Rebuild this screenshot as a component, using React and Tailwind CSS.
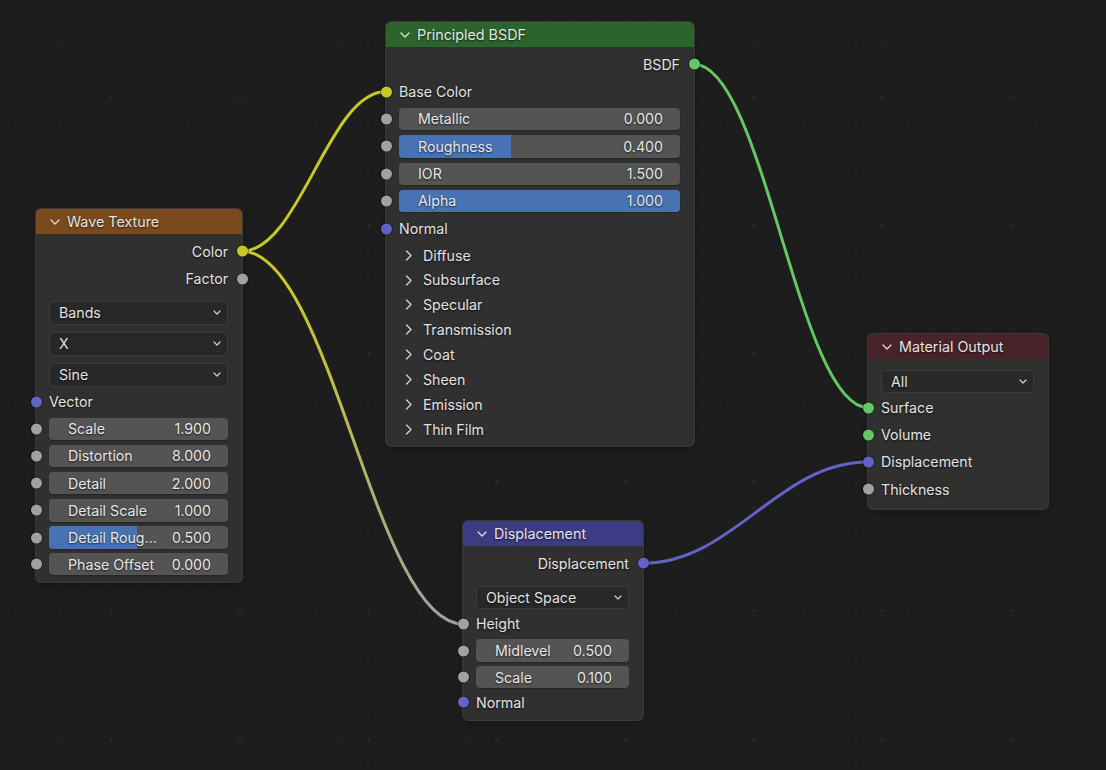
// Blender-style shader node editor

import React from 'react';

const YELLOW = '#c7c729';
const GRAY = '#a1a1a1';
const PURPLE = '#6363c7';
const GREEN = '#63c763';

const socketBg = {
    yellow: 'bg-[#c7c729]',
    gray: 'bg-[#a1a1a1]',
    purple: 'bg-[#6363c7]',
    green: 'bg-[#63c763]',
};

const textShadow = '[text-shadow:0_1px_2px_rgba(0,0,0,0.7)]';

const Socket = ({ color, side }) => (
    <span
        className={`absolute top-1/2 -translate-y-1/2 w-[11px] h-[11px] rounded-full shadow-[0_0_0_1px_rgba(0,0,0,0.35)] ${socketBg[color]} ${
            side === 'right' ? '-right-[5.5px]' : '-left-[5.5px]'
        }`}
    />
);

const ChevronDown = ({ className }) => (
    <svg className={className} width="10" height="6" viewBox="0 0 10 6" fill="none">
        <path d="M1 1 L5 5 L9 1" stroke="#dcdcdc" strokeWidth="1.3" strokeLinecap="round" strokeLinejoin="round" />
    </svg>
);

const ChevronRight = () => (
    <svg width="7" height="11" viewBox="0 0 7 11" fill="none">
        <path d="M1.5 1 L6 5.5 L1.5 10" stroke="#d6d6d6" strokeWidth="1.3" strokeLinecap="round" strokeLinejoin="round" />
    </svg>
);

const Header = ({ title, bg }) => (
    <div className={`h-[25px] flex items-center pl-[14px] gap-[7px] ${bg}`}>
        <ChevronDown />
        <span className={`text-[14.3px] text-[#e4e4e4] ${textShadow}`}>{title}</span>
    </div>
);

const OutputRow = ({ label, socket, h = 'h-[27.4px]' }) => (
    <div className={`relative ${h} flex items-center justify-end pr-[14px]`}>
        <span className={`text-[14.2px] text-[#e2e2e2] ${textShadow}`}>{label}</span>
        <Socket color={socket} side="right" />
    </div>
);

const InputRow = ({ label, socket, h = 'h-[27.2px]', className = '' }) => (
    <div className={`relative ${h} flex items-center pl-[13px] ${className}`}>
        <span className={`text-[14.2px] text-[#e2e2e2] ${textShadow}`}>{label}</span>
        <Socket color={socket} side="left" />
    </div>
);

const Field = ({ label, value, fill = 0, socket = 'gray', h = 'h-[27.2px]', className = '' }) => (
    <div className={`relative ${h} flex items-center pl-[13px] pr-[14px] ${className}`}>
        <Socket color={socket} side="left" />
        <div className="relative flex-1 h-[22.5px] rounded-[4px] bg-[#545454] overflow-hidden shadow-[0_1px_1px_rgba(0,0,0,0.25)]">
            {fill > 0 && <div className="absolute inset-y-0 left-0 bg-[#4772b3]" style={{ width: `${fill * 100}%` }} />}
            <div className="relative h-full flex items-center justify-between pl-[19px] pr-[17px] gap-2">
                <span className={`text-[14.2px] text-[#e6e6e6] whitespace-nowrap ${textShadow}`}>{label}</span>
                <span className={`text-[14.2px] text-[#e6e6e6] ${textShadow}`}>{value}</span>
            </div>
        </div>
    </div>
);

const Dropdown = ({ label, className = '' }) => (
    <div className={`pl-[13px] pr-[14px] ${className}`}>
        <div className="h-[23.3px] rounded-[4px] bg-[#282828] border border-[#3b3b3b] flex items-center justify-between pl-[9px] pr-[6px]">
            <span className={`text-[14.2px] text-[#e2e2e2] ${textShadow}`}>{label}</span>
            <svg width="8" height="5" viewBox="0 0 8 5" fill="none">
                <path d="M1 1 L4 4 L7 1" stroke="#d0d0d0" strokeWidth="1.2" strokeLinecap="round" strokeLinejoin="round" />
            </svg>
        </div>
    </div>
);

const PanelRow = ({ label }) => (
    <div className="h-[24.86px] flex items-center pl-[19px] gap-[11px]">
        <ChevronRight />
        <span className={`text-[14.2px] text-[#e2e2e2] ${textShadow}`}>{label}</span>
    </div>
);

const nodeBase = 'absolute rounded-[5px] bg-[#303030] overflow-visible shadow-[0_0_0_1px_#3a3a3a,0_2px_6px_rgba(0,0,0,0.35)]';

const WaveTexture = () => (
    <div className={`${nodeBase} left-[36px] top-[209px] w-[206px] pb-[4px]`}>
        <div className="rounded-t-[5px] overflow-hidden">
            <Header title="Wave Texture" bg="bg-[#7a4a1e]" />
        </div>
        <div className="pt-[3.5px]">
            <OutputRow label="Color" socket="yellow" />
            <OutputRow label="Factor" socket="gray" />
            <Dropdown label="Bands" className="mt-[9px]" />
            <Dropdown label="X" className="mt-[7.7px]" />
            <Dropdown label="Sine" className="mt-[7.7px]" />
            <InputRow label="Vector" socket="purple" className="mt-[1.5px]" />
            <Field label="Scale" value="1.900" />
            <Field label="Distortion" value="8.000" />
            <Field label="Detail" value="2.000" />
            <Field label="Detail Scale" value="1.000" />
            <Field label="Detail Roug..." value="0.500" fill={0.49} />
            <Field label="Phase Offset" value="0.000" className="-mt-[0.6px]" />
        </div>
    </div>
);

const PrincipledBSDF = () => (
    <div className={`${nodeBase} left-[386px] top-[22px] w-[308px] pb-[4px]`}>
        <div className="rounded-t-[5px] overflow-hidden">
            <Header title="Principled BSDF" bg="bg-[#2b652b]" />
        </div>
        <div className="pt-[3.5px]">
            <OutputRow label="BSDF" socket="green" />
            <InputRow label="Base Color" socket="yellow" h="h-[27.4px]" />
            <Field label="Metallic" value="0.000" h="h-[27.4px]" />
            <Field label="Roughness" value="0.400" fill={0.4} h="h-[27.4px]" />
            <Field label="IOR" value="1.500" h="h-[27.4px]" />
            <Field label="Alpha" value="1.000" fill={1} h="h-[27.4px]" />
            <InputRow label="Normal" socket="purple" h="h-[27.4px]" />
        </div>
        <div className="mt-[0.5px]">
            {['Diffuse', 'Subsurface', 'Specular', 'Transmission', 'Coat', 'Sheen', 'Emission', 'Thin Film'].map((p) => (
                <PanelRow key={p} label={p} />
            ))}
        </div>
    </div>
);

const DisplacementNode = () => (
    <div className={`${nodeBase} left-[463px] top-[521px] w-[180px] pb-[4px]`}>
        <div className="rounded-t-[5px] overflow-hidden">
            <Header title="Displacement" bg="bg-[#3c3c84]" />
        </div>
        <div className="pt-[3.5px]">
            <OutputRow label="Displacement" socket="purple" />
            <Dropdown label="Object Space" className="mt-[9px]" />
            <InputRow label="Height" socket="gray" className="mt-[1.5px]" h="h-[26.6px]" />
            <Field label="Midlevel" value="0.500" h="h-[26.6px]" />
            <Field label="Scale" value="0.100" h="h-[26.6px]" />
            <InputRow label="Normal" socket="purple" h="h-[24px]" className="mb-[2px]" />
        </div>
    </div>
);

const MaterialOutput = () => (
    <div className={`${nodeBase} left-[868px] top-[334px] w-[180px] pb-[6px]`}>
        <div className="rounded-t-[5px] overflow-hidden">
            <Header title="Material Output" bg="bg-[#4a232a]" />
        </div>
        <Dropdown label="All" className="mt-[10.5px]" />
        <div className="mt-[1.3px]">
            <InputRow label="Surface" socket="green" />
            <InputRow label="Volume" socket="green" />
            <InputRow label="Displacement" socket="purple" />
            <InputRow label="Thickness" socket="gray" />
        </div>
    </div>
);

// cubic wire between two sockets, handles proportional to horizontal distance
const wirePath = ([x1, y1], [x2, y2]) => {
    const h = Math.abs(x2 - x1) * 0.4;
    return `M${x1} ${y1} C${x1 + h} ${y1} ${x2 - h} ${y2} ${x2} ${y2}`;
};

const sockets = {
    waveColor: [242, 251.2],
    baseColor: [386, 91.6],
    height: [463, 624],
    bsdf: [694, 64.2],
    surface: [868, 407.5],
    dispOut: [643, 563.2],
    matDisp: [868, 462],
};

const Wires = () => (
    <svg className="absolute inset-0" width="1106" height="770" viewBox="0 0 1106 770" fill="none">
        <defs>
            <linearGradient
                id="heightWire"
                gradientUnits="userSpaceOnUse"
                x1={sockets.waveColor[0]}
                y1={sockets.waveColor[1]}
                x2={sockets.height[0]}
                y2={sockets.height[1]}
            >
                <stop offset="0.15" stopColor={YELLOW} />
                <stop offset="0.95" stopColor={GRAY} />
            </linearGradient>
        </defs>
        <path d={wirePath(sockets.waveColor, sockets.baseColor)} stroke={YELLOW} strokeWidth="3" />
        <path d={wirePath(sockets.waveColor, sockets.height)} stroke="url(#heightWire)" strokeWidth="3" />
        <path d={wirePath(sockets.bsdf, sockets.surface)} stroke={GREEN} strokeWidth="3" />
        <path d={wirePath(sockets.dispOut, sockets.matDisp)} stroke={PURPLE} strokeWidth="3" />
    </svg>
);

export default function App() {
    return (
        <div className="relative w-[1106px] h-[770px] overflow-hidden bg-[#1d1d1d] font-['Inter','Noto_Sans',sans-serif] [background-image:radial-gradient(circle,#2c2c2c_1.1px,transparent_1.5px),radial-gradient(circle,#252525_0.8px,transparent_1.1px)] [background-size:128.5px_128.5px,25.7px_25.7px] [background-position:47.4px_32.4px,-4.5px_7.2px]">
            <Wires />
            <WaveTexture />
            <PrincipledBSDF />
            <DisplacementNode />
            <MaterialOutput />
        </div>
    );
}
